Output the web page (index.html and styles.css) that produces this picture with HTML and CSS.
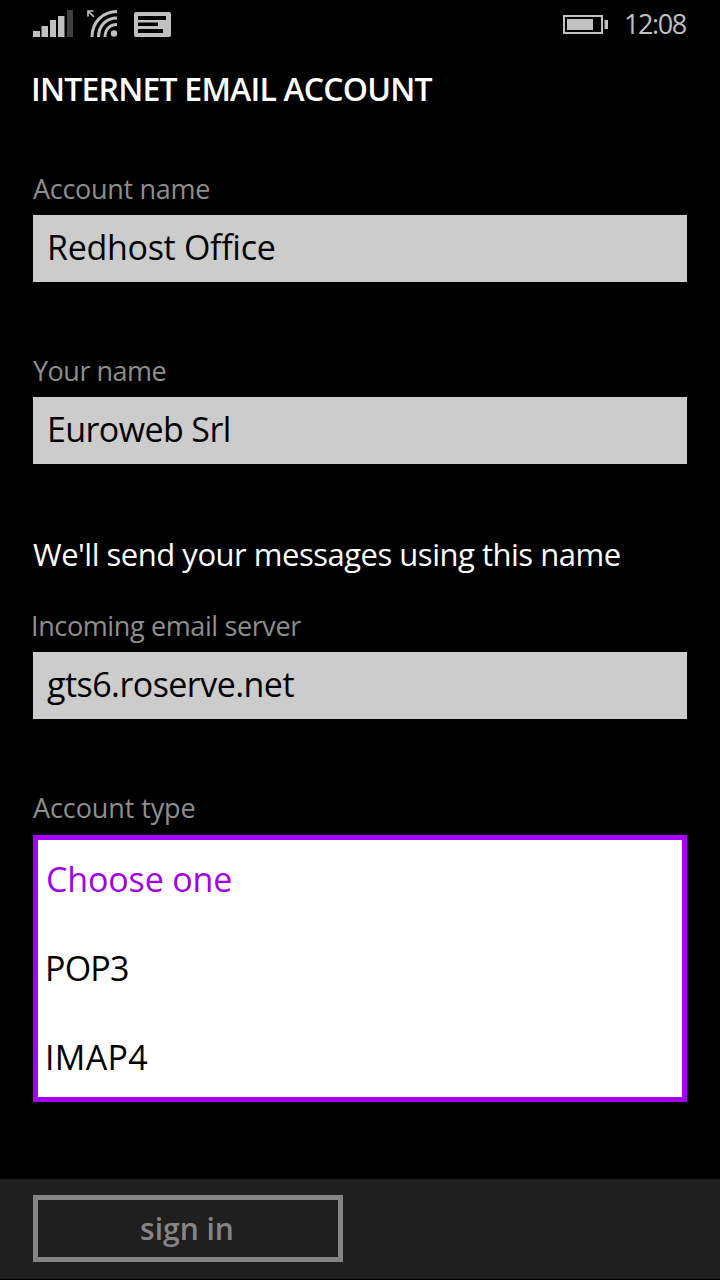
FILE: index.html
```html
<!DOCTYPE html>
<html lang="en">
<head>
<meta charset="utf-8">
<title>Internet email account</title>
<link rel="stylesheet" href="styles.css">
</head>
<body>
<div class="phone">
  <header class="status">
    <svg class="status-left" width="140" height="30" viewBox="33 8 140 30" fill="#c0c0c0">
      <path d="M33 31h7v6h-7zM41.500 26h6.500v11h-6.500zM50 20h6v17h-6zM58 16h6.500v21h-6.500z"/>
      <path fill="#404040" d="M67 10h6v27h-6z"/>
      <g fill="none" stroke="#c0c0c0" stroke-width="3">
        <path d="M92 37C92 22 103 11.500 117 11.500M98.500 37C98.500 26 106 18 117 18M105 37C105 29.500 109.500 24.500 117 24.500"/>
        <path stroke-width="1.700" d="M88 16.500v-5.500h5.500M88 11l6 6"/>
      </g>
      <circle cx="114" cy="33.500" r="3.200"/>
      <path fill-rule="evenodd" d="M136 12h33a2 2 0 0 1 2 2v21a2 2 0 0 1-2 2h-33a2 2 0 0 1-2-2v-21a2 2 0 0 1 2-2zM138 16v4h28v-4zM138 22.500v3.500h20v-3.500zM138 29v4h25v-4z"/>
    </svg>
    <svg class="battery" width="46" height="20" viewBox="563 15 46 20" fill="#c0c0c0">
      <path fill-rule="evenodd" d="M563 15h40v19h-40zM565 17v15h36v-15z"/>
      <path d="M567 19h26v11h-26zM604.500 20h3.500v9h-3.500z"/>
    </svg>
    <span class="time">12:08</span>
  </header>
  <main class="form">
    <h1 class="title">INTERNET EMAIL ACCOUNT</h1>
    <section class="group">
      <div class="label l1">Account name</div>
      <div class="field f1">Redhost Office</div>
    </section>
    <section class="group">
      <div class="label l2">Your name</div>
      <div class="field f2">Euroweb Srl</div>
    </section>
    <p class="hint">We'll send your messages using this name</p>
    <section class="group">
      <div class="label l3">Incoming email server</div>
      <div class="field f3">gts6.roserve.net</div>
    </section>
    <section class="group">
      <div class="label l4">Account type</div>
      <div class="picker">
        <div class="option selected">Choose one</div>
        <div class="option o2">POP3</div>
        <div class="option o3">IMAP4</div>
      </div>
    </section>
  </main>
  <footer class="bar">
    <div class="button">sign in</div>
  </footer>
</div>
</body>
</html>
```
FILE: styles.css
```css
* { box-sizing: border-box; }
body { margin: 0; background: #000; }
.phone {
  display: flex;
  flex-direction: column;
  width: 720px;
  height: 1280px;
  padding-bottom: 1px;
  overflow: hidden;
  background: #000;
  color: #fff;
  font-family: "Open Sans", "Noto Sans", sans-serif;
  white-space: nowrap;
}
.status {
  display: flex;
  align-items: flex-start;
  height: 48px;
  padding: 8px 33px 0;
}
.battery { margin: 7px 15px 0 auto; }
.time { width: 63px; font-size: 27px; line-height: 32px; letter-spacing: -1.4px; color: #c0c0c0; }
.form { flex: 1; padding: 21px 33px 0; }
.title {
  margin: 0 0 62px -2px;
  font-size: 32px;
  line-height: 40px;
  font-weight: 600;
  letter-spacing: -0.8px;
}
.group { margin-bottom: 71px; }
.label { margin-bottom: 8px; font-size: 27px; line-height: 36px; color: #8e8e8e; }
.l1 { letter-spacing: -0.3px; }
.l2 { letter-spacing: -0.5px; }
.l3 { margin-left: -2px; letter-spacing: -0.38px; }
.l4 { margin-bottom: 9px; letter-spacing: -0.1px; }
.field {
  height: 67px;
  padding: 0 14px;
  background: #ccc;
  color: #000;
  font-size: 34px;
  line-height: 65px;
}
.f1 { letter-spacing: -0.3px; }
.f2 { letter-spacing: -0.6px; }
.f3 { letter-spacing: -0.55px; }
.hint { margin: -1px 0 34px; font-size: 31px; line-height: 40px; letter-spacing: -0.49px; }
.picker {
  display: flex;
  flex-direction: column;
  gap: 39px;
  height: 267px;
  padding: 14px 8px 10px;
  border: 5px solid #a600ff;
  background: #fff;
  color: #000;
}
.option { font-size: 34px; line-height: 50px; }
.selected { color: #a000e8; letter-spacing: -0.15px; }
.o2 { margin-left: -1px; letter-spacing: -0.8px; }
.o3 { margin-left: -1px; letter-spacing: 0.3px; }
.bar { height: 100px; padding: 16px 33px; background: #1f1f1f; }
.button {
  width: 310px;
  height: 67px;
  padding-right: 2px;
  border: 5px solid #858585;
  color: #858585;
  font-size: 30px;
  font-weight: 600;
  line-height: 57px;
  text-align: center;
}
```
